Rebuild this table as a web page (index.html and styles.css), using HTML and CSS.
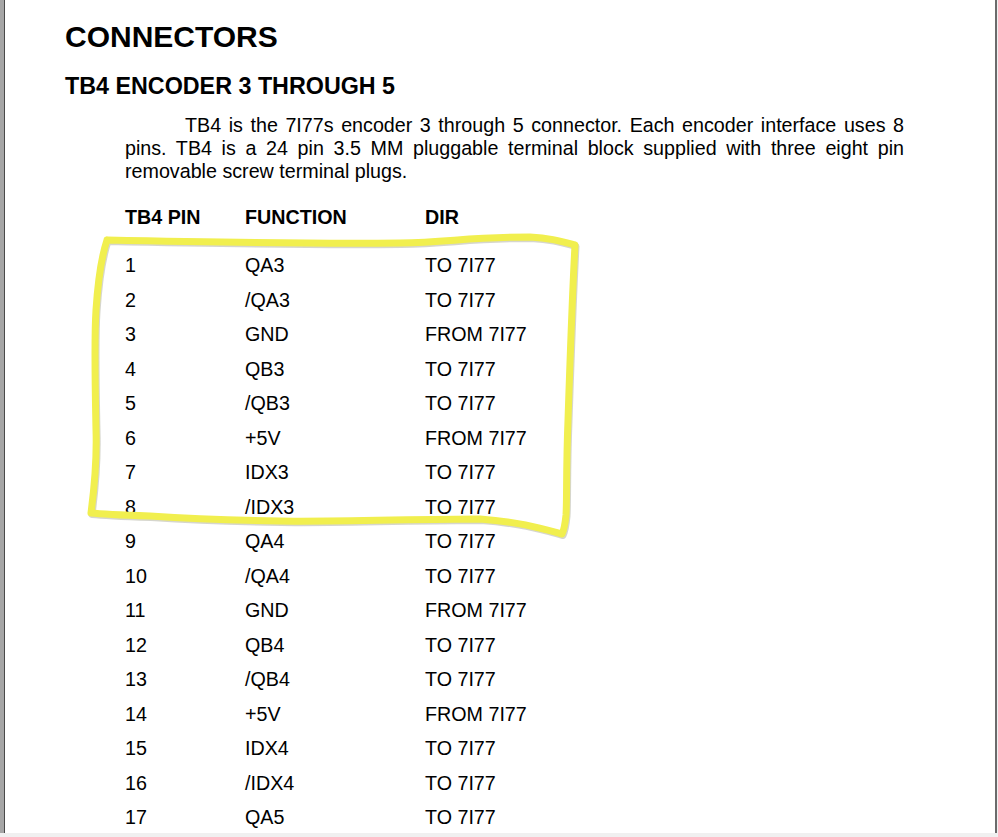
FILE: index.html
```html
<!DOCTYPE html>
<html>
<head>
<meta charset="utf-8">
<link rel="stylesheet" href="styles.css">
</head>
<body>
<div class="viewer">
  <div class="gutter"></div>
  <div class="page">
    <h1 class="title">CONNECTORS</h1>
    <h2 class="subtitle">TB4 ENCODER 3 THROUGH 5</h2>
    <p class="para">
      <span class="line first">TB4 is the 7I77s encoder 3 through 5 connector. Each encoder interface uses 8</span>
      <span class="line">pins. TB4 is a 24 pin 3.5 MM pluggable terminal block supplied with three eight pin</span>
      <span class="line last">removable screw terminal plugs.</span>
    </p>
    <div class="table">
      <div class="th">TB4 PIN</div><div class="th">FUNCTION</div><div class="th">DIR</div>
      <div class="td">1</div><div class="td">QA3</div><div class="td">TO 7I77</div>
      <div class="td">2</div><div class="td">/QA3</div><div class="td">TO 7I77</div>
      <div class="td">3</div><div class="td">GND</div><div class="td">FROM 7I77</div>
      <div class="td">4</div><div class="td">QB3</div><div class="td">TO 7I77</div>
      <div class="td">5</div><div class="td">/QB3</div><div class="td">TO 7I77</div>
      <div class="td">6</div><div class="td">+5V</div><div class="td">FROM 7I77</div>
      <div class="td">7</div><div class="td">IDX3</div><div class="td">TO 7I77</div>
      <div class="td">8</div><div class="td">/IDX3</div><div class="td">TO 7I77</div>
      <div class="td">9</div><div class="td">QA4</div><div class="td">TO 7I77</div>
      <div class="td">10</div><div class="td">/QA4</div><div class="td">TO 7I77</div>
      <div class="td">11</div><div class="td">GND</div><div class="td">FROM 7I77</div>
      <div class="td">12</div><div class="td">QB4</div><div class="td">TO 7I77</div>
      <div class="td">13</div><div class="td">/QB4</div><div class="td">TO 7I77</div>
      <div class="td">14</div><div class="td">+5V</div><div class="td">FROM 7I77</div>
      <div class="td">15</div><div class="td">IDX4</div><div class="td">TO 7I77</div>
      <div class="td">16</div><div class="td">/IDX4</div><div class="td">TO 7I77</div>
      <div class="td">17</div><div class="td">QA5</div><div class="td">TO 7I77</div>
    </div>
    <svg class="markup" width="998" height="837" viewBox="0 0 998 837">
      <path class="shadow" d="M107 240 C 200 242, 300 244, 400 243 C 450 242, 470 237, 530 237 C 550 238, 560 241, 575 245 C 572 300, 570 360, 568 420 C 566 470, 567 500, 566 515 C 565 525, 564 530, 562 534 C 540 528, 520 522, 480 519 C 420 519, 330 522, 280 521 C 220 520, 180 518, 150 516 C 120 515, 100 514, 91 513 C 94 490, 97 460, 96 430 C 95 380, 94 340, 96 310 C 98 280, 102 255, 107 240"/>
      <path class="pen" d="M107 240 C 200 242, 300 244, 400 243 C 450 242, 470 237, 530 237 C 550 238, 560 241, 575 245 C 572 300, 570 360, 568 420 C 566 470, 567 500, 566 515 C 565 525, 564 530, 562 534 C 540 528, 520 522, 480 519 C 420 519, 330 522, 280 521 C 220 520, 180 518, 150 516 C 120 515, 100 514, 91 513 C 94 490, 97 460, 96 430 C 95 380, 94 340, 96 310 C 98 280, 102 255, 107 240"/>
    </svg>
  </div>
</div>
</body>
</html>
```

FILE: styles.css
```css
html, body {
  margin: 0;
  padding: 0;
  background: #f0f0f0;
}
body {
  width: 998px;
  height: 837px;
  overflow: hidden;
  font-family: "Liberation Sans", Arial, sans-serif;
  color: #000;
}
.viewer {
  display: flex;
  height: 833px;
  width: 997px;
}
.gutter {
  width: 4px;
  background: #a6a6a6;
  border-right: 1px solid #4a4a4a;
}
.page {
  flex: 1;
  background: #fff;
  border-right: 2px solid #6b6b6b;
  padding: 19px 0 0 60px;
  overflow: hidden;
}
.title {
  margin: 0;
  font-size: 30px;
  line-height: 36px;
  font-weight: bold;
}
.subtitle {
  margin: 16px 0 0 0;
  font-size: 23.3px;
  line-height: 30px;
  font-weight: bold;
}
.para {
  margin: 12.5px 0 0 60px;
  width: 779px;
  font-size: 19.7px;
  line-height: 23px;
}
.line {
  display: block;
  text-align: justify;
  text-align-last: justify;
}
.line.first {
  padding-left: 60px;
}
.line.last {
  text-align-last: left;
}
.table {
  margin: 17.75px 0 0 60px;
  display: grid;
  grid-template-columns: 120px 180px 200px;
  grid-template-rows: 48px;
  grid-auto-rows: 34.5px;
  font-size: 19.7px;
  align-items: start;
}
.th {
  font-weight: bold;
  line-height: 34.5px;
}
.td {
  line-height: 34.5px;
}
.markup {
  position: absolute;
  left: 0;
  top: 0;
  pointer-events: none;
}
.markup path {
  fill: none;
  stroke-linecap: round;
  stroke-linejoin: round;
}
.pen {
  stroke: #f1ef4e;
  stroke-width: 7px;
}
.shadow {
  stroke: #8a8a70;
  stroke-width: 7px;
  opacity: 0.35;
  transform: translate(1px, 1.5px);
}
```
